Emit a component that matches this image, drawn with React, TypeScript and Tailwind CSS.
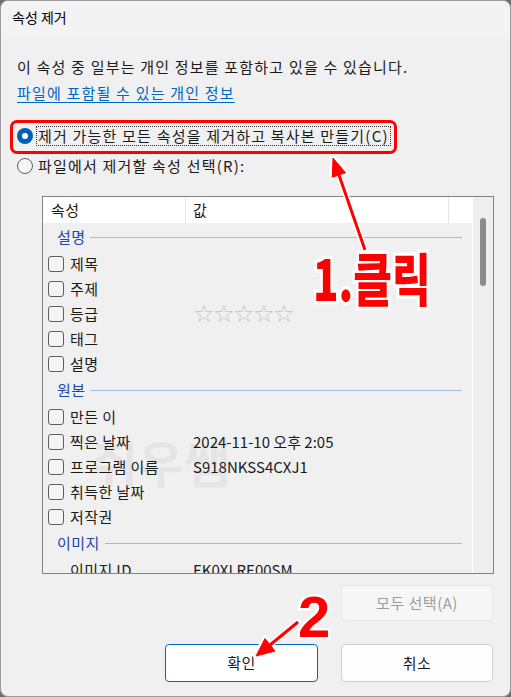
import React from "react";

const groups: { title: string; items: { label: string; value?: string; check?: boolean }[] }[] = [
  {
    title: "설명",
    items: [
      { label: "제목" },
      { label: "주제" },
      { label: "등급", value: "stars" },
      { label: "태그" },
      { label: "설명" },
    ],
  },
  {
    title: "원본",
    items: [
      { label: "만든 이" },
      { label: "찍은 날짜", value: "2024-11-10 오후 2:05" },
      { label: "프로그램 이름", value: "S918NKSS4CXJ1" },
      { label: "취득한 날짜" },
      { label: "저작권" },
    ],
  },
  {
    title: "이미지",
    items: [{ label: "이미지 ID", value: "EK0XLRE00SM", check: false }],
  },
];

function Stars() {
  return (
    <div className="flex text-[#c4c4c4] text-[24px] leading-none font-['DejaVu_Sans',sans-serif]">
      {[0, 1, 2, 3, 4].map((i) => (
        <span key={i} className="w-[20px]">☆</span>
      ))}
    </div>
  );
}

function Checkbox() {
  return <div className="w-4 h-4 shrink-0 rounded-[3px] border border-[#5f5f5f] bg-[#f4f4f4]" />;
}

export default function App() {
  return (
    <div className="relative w-[511px] h-[697px] bg-[#6e6e6e] overflow-hidden font-['Noto_Sans_CJK_KR',sans-serif] text-[15px] text-[#1a1a1a]">
      <div className="h-full rounded-[8px] border border-[#9c9c9c] bg-[#f0f0f0] flex flex-col overflow-hidden">
        {/* title bar */}
        <div className="h-[37px] shrink-0 bg-[#f3f3f3] pl-[11px] pt-[6px] text-[14px] leading-[20px] text-black">
          속성 제거
        </div>

        <div className="flex flex-col pl-[16px] pr-[17px] tracking-[1.2px]">
          <p className="mt-[19px] leading-[20px]">이 속성 중 일부는 개인 정보를 포함하고 있을 수 있습니다.</p>
          <a className="mt-[6px] leading-[20px] text-[#0067c0] underline underline-offset-[3px] w-fit">
            파일에 포함될 수 있는 개인 정보
          </a>

          <div className="mt-[18px] h-[30px] flex items-center">
            <div className="w-4 h-4 rounded-full bg-[#005fb8] flex items-center justify-center shrink-0">
              <div className="w-[6px] h-[6px] rounded-full bg-white" />
            </div>
            <span className="ml-[3px] border border-dotted border-[#333] px-[1px] leading-[18px]">
              제거 가능한 모든 속성을 제거하고 복사본 만들기(C)
            </span>
          </div>
          <div className="h-[30px] flex items-center">
            <div className="w-4 h-4 rounded-full border border-[#5f5f5f] bg-[#f6f6f6] shrink-0" />
            <span className="ml-[4px] px-[1px] leading-[18px]">파일에서 제거할 속성 선택(R):</span>
          </div>

          {/* list */}
          <div className="mt-[15px] ml-[25px] w-[452px] h-[378px] border border-[#838383] flex overflow-hidden tracking-[0.4px]">
            <div className="w-[429px] flex flex-col">
              <div className="h-[26px] shrink-0 bg-white flex leading-[20px]">
                <div className="w-[143px] pl-[8px] flex items-center border-r border-[#e5e5e5]">속성</div>
                <div className="w-[263px] pl-[7px] flex items-center border-r border-[#e5e5e5]">값</div>
              </div>
              {groups.map((g) => (
                <div key={g.title} className="flex flex-col">
                  <div className="h-[28px] flex items-center pl-[14px] pr-[10px]">
                    <span className="text-[#2345a8] leading-[20px]">{g.title}</span>
                    <div className="ml-[5px] flex-1 h-px bg-[#a7b9df]" />
                  </div>
                  {g.items.map((it) => (
                    <div key={it.label} className="h-[25px] grid grid-cols-[150px_1fr] items-center">
                      <div className="flex items-center pl-[5px] gap-[6px]">
                        {it.check === false ? <div className="w-4 h-4" /> : <Checkbox />}
                        <span className="leading-[20px] whitespace-nowrap">{it.label}</span>
                      </div>
                      <div className="leading-[20px] whitespace-nowrap tracking-normal">
                        {it.value === "stars" ? <Stars /> : it.value}
                      </div>
                    </div>
                  ))}
                </div>
              ))}
            </div>
            <div className="w-[21px] border-l border-white bg-[#eeeeee] pt-[21px] flex justify-center">
              <div className="w-[6px] h-[68px] rounded-[3px] bg-[#8a8a8a]" />
            </div>
          </div>

          <div className="mt-[11px] flex justify-end tracking-[0.5px]">
            <div className="w-[152px] h-[36px] rounded-[4px] border border-[#e6e6e6] bg-[#f6f6f6] text-[#9d9d9d] flex items-center justify-center">
              모두 선택(A)
            </div>
          </div>
          <div className="mt-[23px] flex justify-end gap-[23px] tracking-[0.5px]">
            <div className="w-[153px] h-[38px] rounded-[4px] border border-[#0067c0] bg-white flex items-center justify-center">
              확인
            </div>
            <div className="w-[152px] h-[38px] rounded-[4px] border border-[#d1d1d1] bg-[#fdfdfd] flex items-center justify-center">
              취소
            </div>
          </div>
        </div>
      </div>

      {/* annotations */}
      <div className="absolute left-[10px] top-[120px] w-[387px] h-[34px] rounded-[7px] border-[3px] border-[#ff0000]" />
      <div className="absolute left-[92px] top-[436px] text-[50px] font-bold text-[#000] opacity-[0.04] leading-none pointer-events-none">
        쥐우쌤
      </div>
      <svg className="absolute inset-0 pointer-events-none" width="511" height="697">
        <g stroke="white" strokeWidth="6" strokeLinecap="round" fill="white" strokeLinejoin="round">
          <line x1="365" y1="250" x2="339" y2="175" />
          <polygon points="333,158 345.5,172.7 332.3,177.3" />
          <line x1="298" y1="622" x2="270" y2="645" />
          <polygon points="256,656 275,651 265,638.5" />
        </g>
        <g stroke="#ff0000" strokeWidth="3" fill="#ff0000">
          <line x1="365" y1="250" x2="339" y2="175" />
          <polygon points="333,158 345.5,172.7 332.3,177.3" strokeWidth="1" />
          <line x1="298" y1="622" x2="270" y2="645" />
          <polygon points="256,656 275,651 265,638.5" strokeWidth="1" />
        </g>
      </svg>
      <div className="absolute left-[313px] top-[250px] text-[42px] font-black leading-[40px] text-[#ff0000] origin-top scale-y-[1.35] [-webkit-text-stroke:5px_white] [paint-order:stroke_fill] whitespace-nowrap">
        1.클릭
      </div>
      <div className="absolute left-[298px] top-[588px] text-[58px] font-bold leading-[58px] text-[#ff0000] font-['Liberation_Sans',sans-serif] [-webkit-text-stroke:5px_white] [paint-order:stroke_fill]">
        2
      </div>
    </div>
  );
}
